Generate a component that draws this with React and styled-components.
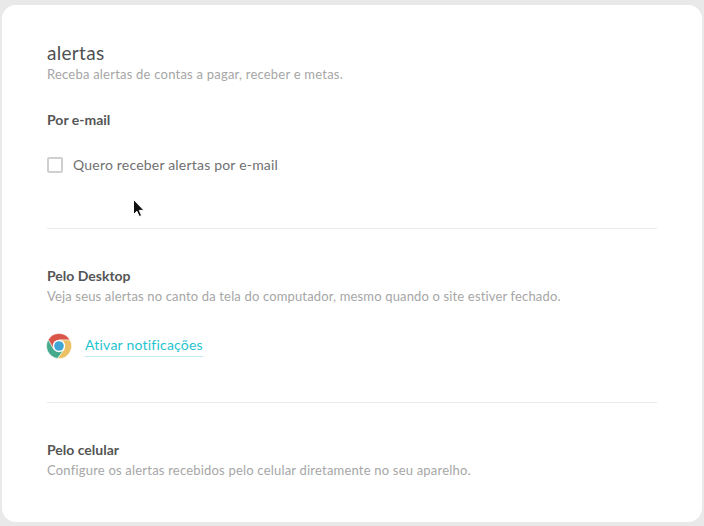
import React from "react";
import styled, { createGlobalStyle } from "styled-components";

const Global = createGlobalStyle`
  html, body { margin: 0; padding: 0; background: #e9e9e9; }
  body { font-family: Lato, "Liberation Sans", sans-serif; }
`;

const Stage = styled.div`
  width: 704px;
  height: 526px;
  padding: 5px 2px 4px 2px;
  box-sizing: border-box;
  overflow: hidden;
  position: relative;
`;

const Card = styled.main`
  height: 517px;
  box-sizing: border-box;
  background: #fff;
  border-radius: 14px;
  padding: 37px 45px 0;
`;

const PageTitle = styled.h1`
  margin: 0;
  font: 400 19px/22px Lato, sans-serif;
  letter-spacing: 0.3px;
  color: #505050;
`;

const Hint = styled.p`
  margin: ${(p) => p.$top || 0}px 0 0;
  font: 400 13px/16px Lato, sans-serif;
  letter-spacing: ${(p) => p.$tracking || 0.2}px;
  color: #a6a6a6;
`;

const SectionTitle = styled.h2`
  margin: ${(p) => p.$top || 0}px 0 0;
  font: 700 14px/18px Lato, sans-serif;
  color: #555;
`;

const CheckRow = styled.label`
  display: flex;
  align-items: center;
  gap: 10px;
  margin-top: 27px;
  height: 18px;
`;

const Box = styled.span`
  width: 16px;
  height: 16px;
  box-sizing: border-box;
  border: 2px solid #cfcfcf;
  border-radius: 2px;
  background: #fff;
`;

const CheckText = styled.span`
  font: 400 14px/18px Lato, sans-serif;
  letter-spacing: 0.2px;
  color: #707070;
`;

const Rule = styled.hr`
  margin: ${(p) => p.$top}px 0 0;
  border: 0;
  height: 1px;
  background: #ebebeb;
`;

const NotifyRow = styled.div`
  display: flex;
  align-items: center;
  gap: 13px;
  margin-top: 29px;
  height: 26px;
`;

const NotifyLink = styled.a`
  font: 400 14px/18px Lato, sans-serif;
  letter-spacing: 0.22px;
  color: #1fc4cf;
  padding-bottom: 2px;
  border-bottom: 1px solid #bdedf0;
  text-decoration: none;
  margin-top: 1px;
`;

const Cursor = styled.svg`
  position: absolute;
  left: 130px;
  top: 197px;
`;

const ChromeIcon = styled.svg`
  margin-left: -1px;
`;

const Chrome = () => (
  <ChromeIcon width="26" height="26" viewBox="0 0 26 26" aria-hidden="true">
    <path d="M24 7A12.5 12.5 0 0 0 2.2 6.8L7.5 16.2 13 7Z" fill="#d9554a" stroke="#fff" strokeWidth="0.5" />
    <path d="M2.2 6.8A12.5 12.5 0 0 0 11.7 25.4L18.4 16.2H7.5Z" fill="#45a98c" stroke="#fff" strokeWidth="0.5" />
    <path d="M11.7 25.4A12.5 12.5 0 0 0 24 7H13L18.4 16.2Z" fill="#ecc064" stroke="#fff" strokeWidth="0.5" />
    <circle cx="13" cy="13" r="6.2" fill="#fff" />
    <circle cx="13" cy="13" r="4.8" fill="#3ea5d4" />
  </ChromeIcon>
);

export default function App() {
  return (
    <>
      <Global />
      <Stage>
        <Card>
          <PageTitle>alertas</PageTitle>
          <Hint $top={2} $tracking={0.22}>Receba alertas de contas a pagar, receber e metas.</Hint>
          <SectionTitle $top={29}>Por e-mail</SectionTitle>
          <CheckRow>
            <Box />
            <CheckText>Quero receber alertas por e-mail</CheckText>
          </CheckRow>
          <Rule $top={54} />
          <SectionTitle $top={38}>Pelo Desktop</SectionTitle>
          <Hint $top={3} $tracking={0.155}>Veja seus alertas no canto da tela do computador, mesmo quando o site estiver fechado.</Hint>
          <NotifyRow>
            <Chrome />
            <NotifyLink>Ativar notificações</NotifyLink>
          </NotifyRow>
          <Rule $top={43} />
          <SectionTitle $top={38}>Pelo celular</SectionTitle>
          <Hint $top={3}>Configure os alertas recebidos pelo celular diretamente no seu aparelho.</Hint>
        </Card>
        <Cursor width="16" height="22" viewBox="0 0 16 22" aria-hidden="true">
          <path d="M3.5 2.5v15l3.4-3.2 2.3 5.2 2.4-1-2.3-5.1h4.7Z" fill="#111" stroke="#fff" strokeWidth="1" />
        </Cursor>
      </Stage>
    </>
  );
}
